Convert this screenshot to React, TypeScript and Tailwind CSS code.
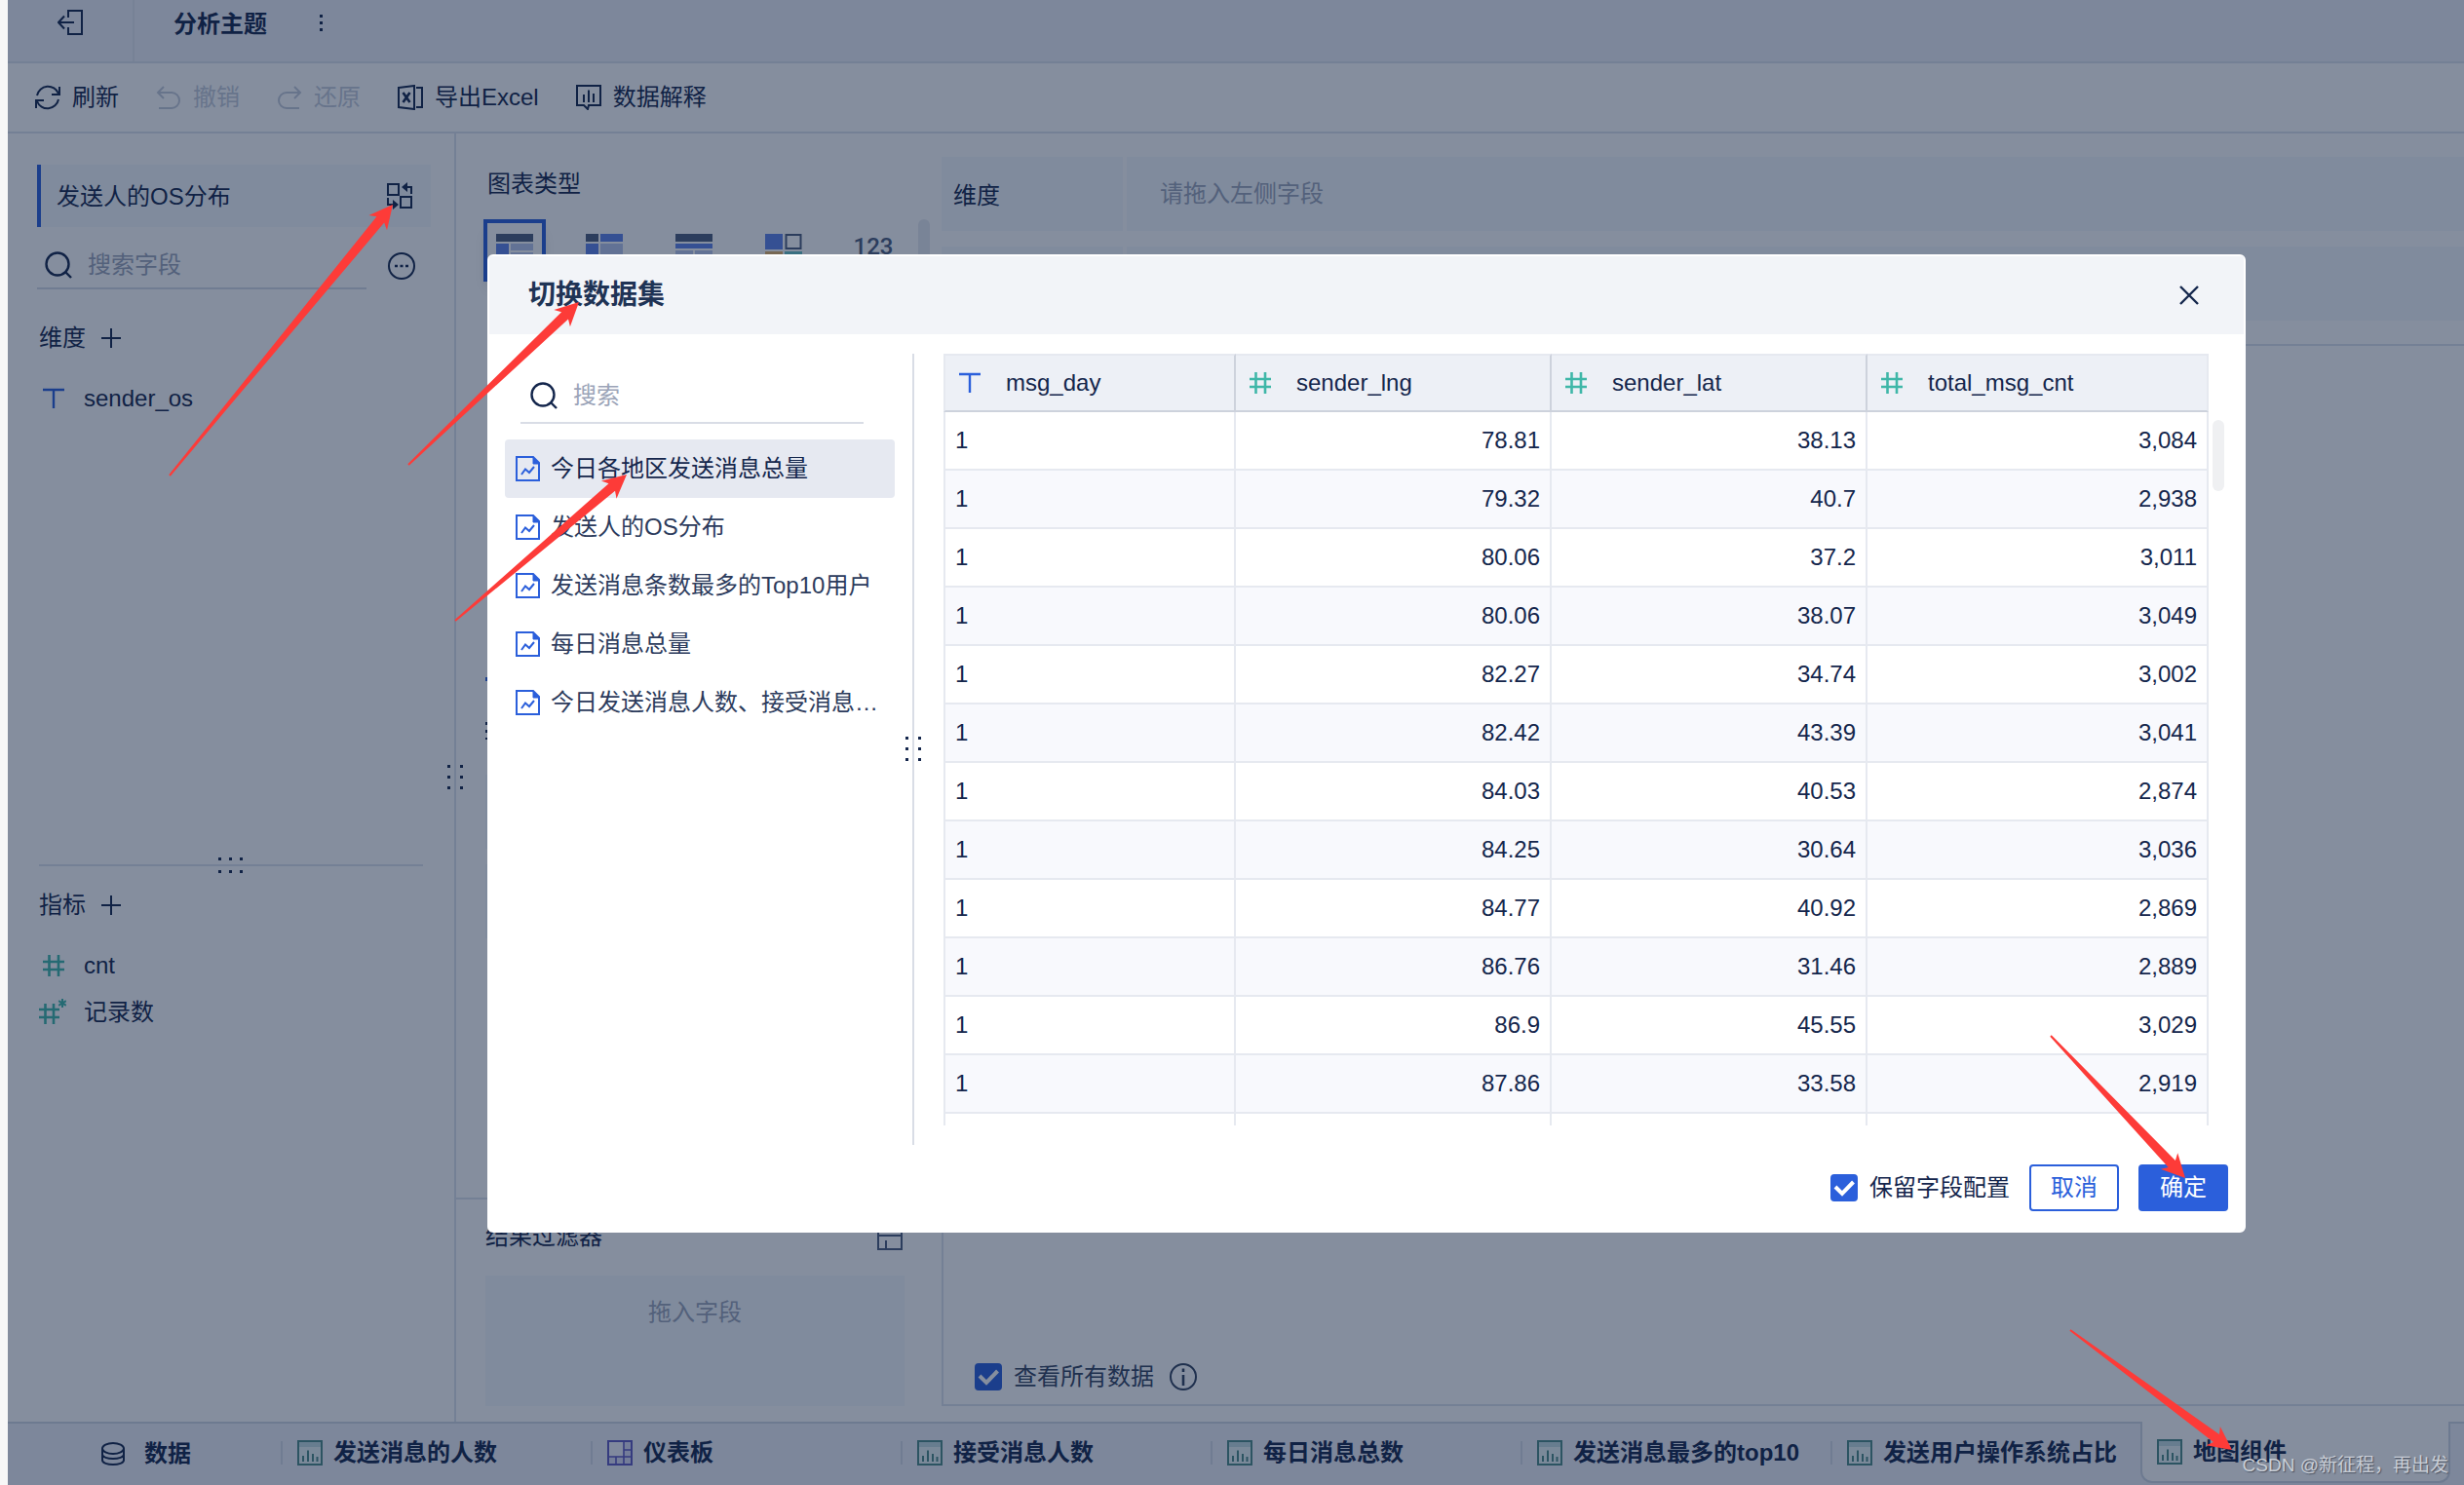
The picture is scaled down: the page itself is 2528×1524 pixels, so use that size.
import { useState } from "react";
import type { ReactNode } from "react";

interface Column {
  name: string;
  type: "text" | "number";
  width: string;
}

const datasets = [
  "今日各地区发送消息总量",
  "发送人的OS分布",
  "发送消息条数最多的Top10用户",
  "每日消息总量",
  "今日发送消息人数、接受消息人数",
];

const columns: Column[] = [
  { name: "msg_day", type: "text", width: "w-[300px]" },
  { name: "sender_lng", type: "number", width: "w-[324px]" },
  { name: "sender_lat", type: "number", width: "w-[324px]" },
  { name: "total_msg_cnt", type: "number", width: "w-auto" },
];

const rows = [
  ["1", "78.81", "38.13", "3,084"],
  ["1", "79.32", "40.7", "2,938"],
  ["1", "80.06", "37.2", "3,011"],
  ["1", "80.06", "38.07", "3,049"],
  ["1", "82.27", "34.74", "3,002"],
  ["1", "82.42", "43.39", "3,041"],
  ["1", "84.03", "40.53", "2,874"],
  ["1", "84.25", "30.64", "3,036"],
  ["1", "84.77", "40.92", "2,869"],
  ["1", "86.76", "31.46", "2,889"],
  ["1", "86.9", "45.55", "3,029"],
  ["1", "87.86", "33.58", "2,919"],
  ["", "", "", ""],
];

const tabs = [
  { name: "发送消息的人数", icon: "chart" },
  { name: "仪表板", icon: "board" },
  { name: "接受消息人数", icon: "chart" },
  { name: "每日消息总数", icon: "chart" },
  { name: "发送消息最多的top10", icon: "chart" },
  { name: "发送用户操作系统占比", icon: "chart" },
];

const arrows = [
  { from: [174, 488], to: [403, 210] },
  { from: [419, 477], to: [594, 310] },
  { from: [467, 637], to: [643, 487] },
  { from: [2104, 1063], to: [2242, 1209] },
  { from: [2124, 1365], to: [2290, 1488] },
];

function Svg({ size = 26, className = "", children }: { size?: number; className?: string; children: ReactNode }) {
  return (
    <svg width={size} height={size} viewBox={`0 0 ${size} ${size}`} fill="none" stroke="currentColor" strokeWidth="2" className={`shrink-0 ${className}`} aria-hidden="true">
      {children}
    </svg>
  );
}

function SearchIcon() {
  return (
    <Svg size={28}>
      <circle cx="13" cy="13" r="11.5" strokeWidth="2.4" />
      <path d="M21 21l6 6" strokeWidth="2.4" />
    </Svg>
  );
}

function TextTypeIcon() {
  return (
    <Svg size={22} className="text-[#2b5fdb]">
      <path d="M0 2h22M11 2v19" strokeWidth="2.4" />
    </Svg>
  );
}

function NumberTypeIcon() {
  return (
    <Svg size={22} className="text-[#3fb7a8]">
      <path d="M6.5 0v22M16 0v22M0 7h22M0 15h22" strokeWidth="2.6" />
    </Svg>
  );
}

function RecordCountIcon() {
  return (
    <Svg size={28} className="text-[#3fb7a8]">
      <path d="M6.5 5v21M15 5v21M0 11h21M0 19h21" strokeWidth="2.6" />
      <path d="M24 0v9M20.2 2.2l7.6 4.6M27.8 2.2l-7.6 4.6" strokeWidth="2" />
    </Svg>
  );
}

function DatasetIcon() {
  return (
    <Svg className="text-[#2b5fdb]">
      <path d="M1 1h17l6 6v18H1z" />
      <path d="M18 1l6 7h-6z" fill="currentColor" strokeWidth="1" />
      <path d="M6 19l4-5.500 4 3.500 5-6" />
    </Svg>
  );
}

function ChartTabIcon() {
  return (
    <Svg className="text-[#4d8a86]">
      <rect x="1" y="1" width="24" height="24" fill="#e9f4f4" />
      <rect x="2" y="2" width="22" height="5" fill="#c3dde0" stroke="none" />
      <path d="M6 22v-6M11 22V10.500M16 22v-8M20.500 22v-5" />
    </Svg>
  );
}

function BoardTabIcon() {
  return (
    <Svg className="text-[#5f58c0]">
      <rect x="1" y="1" width="24" height="24" fill="#dcdcf5" />
      <rect x="2" y="2" width="15" height="14" fill="#f4f5fd" stroke="none" />
      <path d="M17 1v16M1 17h24M17 10h8M9 17v8M17 17v8" strokeWidth="1.6" />
    </Svg>
  );
}

function PlusIcon() {
  return (
    <Svg size={20}>
      <path d="M10 0v20M0 10h20" />
    </Svg>
  );
}

function DragDots({ vertical = false }: { vertical?: boolean }) {
  return vertical ? (
    <svg width="16" height="26" viewBox="0 0 16 26" fill="#14264c" aria-hidden="true">
      {[0, 11, 22].map((y) => [0, 13].map((x) => <rect key={`${x}-${y}`} x={x} y={y} width="3" height="3" />))}
    </svg>
  ) : (
    <svg width="26" height="16" viewBox="0 0 26 16" fill="#14264c" aria-hidden="true">
      {[0, 11, 22].map((x) => [0, 13].map((y) => <rect key={`${x}-${y}`} x={x} y={y} width="3" height="3" />))}
    </svg>
  );
}

function CheckBox({ label, id }: { label: string; id: string }) {
  return (
    <div className="flex items-center gap-3">
      <span className="relative flex h-7 w-7">
        <input id={id} type="checkbox" defaultChecked className="peer h-7 w-7 appearance-none rounded-sm border-2 border-[#2b5fdb] checked:bg-[#2b5fdb]" />
        <svg className="pointer-events-none absolute inset-0 hidden peer-checked:block" width="28" height="28" viewBox="0 0 28 28" fill="none" stroke="#fff" strokeWidth="4" aria-hidden="true">
          <path d="M5 13l7 7L23.500 8" />
        </svg>
      </span>
      <label htmlFor={id}>{label}</label>
    </div>
  );
}

function ToolButton({ label, disabled = false, children }: { label: string; disabled?: boolean; children: ReactNode }) {
  return (
    <button type="button" disabled={disabled} className="flex items-center gap-3 disabled:text-[#c3cad8]">
      {children}
      {label}
    </button>
  );
}

function TopBar() {
  return (
    <>
      <header className="flex h-[65px] border-b-2 border-[#dde2ec] bg-[#eff1f8]">
        <div className="flex w-[130px] justify-center border-r-2 border-[#e3e7ef] pt-[10px]">
          <button type="button" aria-label="退出" className="h-[26px]">
            <Svg>
              <path d="M11 8V1h14v24H11v-7M1 13h16M7 6.500L1 13l6 6.500" />
            </Svg>
          </button>
        </div>
        <h1 className="pt-[7px] pl-10 font-bold leading-9">分析主题</h1>
        <button type="button" aria-label="更多" className="ml-[54px] h-12">
          <svg width="4" height="18" viewBox="0 0 4 18" fill="currentColor" aria-hidden="true">
            <rect width="3" height="3" />
            <rect y="7" width="3" height="3" />
            <rect y="14" width="3" height="3" />
          </svg>
        </button>
      </header>
      <div className="flex h-[72px] items-center gap-[38px] border-b-2 border-[#dde2ec] pl-7">
        <ToolButton label="刷新">
          <Svg>
            <path d="M2 11A11.500 11.500 0 0 1 24 9M24 15A11.500 11.500 0 0 1 2 17M25 2v8h-8M1 24v-8h8" />
          </Svg>
        </ToolButton>
        <ToolButton label="撤销" disabled>
          <Svg>
            <path d="M8 2L2 8l6 6M2 8h14a8 8 0 0 1 0 16H3" />
          </Svg>
        </ToolButton>
        <ToolButton label="还原" disabled>
          <Svg>
            <path d="M18 2l6 6-6 6M24 8H10a8 8 0 0 0 0 16h13" />
          </Svg>
        </ToolButton>
        <ToolButton label="导出Excel">
          <Svg>
            <path d="M1 3l16-2v24L1 23zM19 3h6v20h-6" />
            <path d="M5.500 8l7 10M12.500 8l-7 10" strokeWidth="2.600" />
          </Svg>
        </ToolButton>
        <ToolButton label="数据解释">
          <Svg>
            <path d="M1 1h24v20H13l-1 4-4-4H1zM8 10v8M13 5.500V18M18 9v9" />
          </Svg>
        </ToolButton>
      </div>
    </>
  );
}

function FieldPanel() {
  return (
    <aside className="relative flex w-[460px] shrink-0 flex-col border-r-2 border-[#dde2ec] pr-6 pl-[30px]">
      <div className="flex-1">
        <div className="mt-8 flex h-16 items-center justify-between border-l-4 border-[#2b5fdb] bg-[#f5f9fc] pr-[18px] pl-4">
          <span className="pt-0.5">发送人的OS分布</span>
          <button type="button" aria-label="切换数据集">
            <Svg size={28}>
              <path d="M2 2h11v11H2zM15 15h11v11H15zM20 5h6v7M2 16v7h6" />
              <path d="M22 0v10l-6-5zM7 18v10l6-5z" fill="currentColor" stroke="none" />
            </Svg>
          </button>
        </div>
        <div className="mt-4 flex items-center justify-between pr-4">
          <div className="flex h-12 w-[338px] items-center gap-4 border-b-2 border-[#d5dbe6] pl-2">
            <SearchIcon />
            <input aria-label="搜索字段" placeholder="搜索字段" className="w-full outline-none placeholder:text-[#9ba4b8]" />
          </div>
          <button type="button" aria-label="字段选项">
            <Svg size={28}>
              <circle cx="14" cy="14" r="13" />
              <path d="M7 14h3M12.500 14h3M18 14h3" strokeWidth="2.500" />
            </Svg>
          </button>
        </div>
        <div className="mt-[30px] flex h-10 items-center gap-4 pl-0.5">
          <h2>维度</h2>
          <button type="button" aria-label="添加维度"><PlusIcon /></button>
        </div>
        <ul className="mt-[18px] pl-0.5">
          <li className="flex h-12 items-center gap-5 pl-1"><TextTypeIcon />sender_os</li>
        </ul>
      </div>

      <div className="relative mr-2 ml-0.5 h-0.5 bg-[#dde2ec]">
        <div className="absolute left-1/2 -top-[7px] -translate-x-1/2"><DragDots /></div>
      </div>

      <div className="h-[570px] pt-5 pl-0.5">
        <div className="flex h-10 items-center gap-4">
          <h2>指标</h2>
          <button type="button" aria-label="添加指标"><PlusIcon /></button>
        </div>
        <ul className="mt-[18px]">
          <li className="flex h-12 items-center gap-5 pl-1"><NumberTypeIcon />cnt</li>
          <li className="flex h-12 items-center gap-[18px]"><RecordCountIcon />记录数</li>
        </ul>
      </div>
      <div className="absolute -right-[9px] top-1/2 -translate-y-1/2"><DragDots vertical /></div>
    </aside>
  );
}

function ConfigPanel() {
  return (
    <section className="flex w-[498px] shrink-0 flex-col">
      <div className="flex-1 pl-7">
        <h2 className="mt-8 pl-1 leading-10">图表类型</h2>
        <div className="mt-4 flex">
          <div className="flex gap-7">
            <button type="button" aria-label="分组表" className="flex h-16 w-16 items-start justify-center border-4 border-[#2b5fdb] pt-[11px] shadow-lg">
              <Svg size={38}>
                <g stroke="none">
                  <path d="M0 0h38v8H0z" fill="#4c5c7c" />
                  <path d="M0 10h13v28H0z" fill="#5f82e8" />
                  <path d="M15 10h23v7H15zM15 19h23v19H15z" fill="#b9c6ec" />
                </g>
              </Svg>
            </button>
            <button type="button" aria-label="交叉表" className="flex h-16 w-16 items-start justify-center pt-[15px]">
              <Svg size={38}>
                <g stroke="none">
                  <path d="M0 0h13v8H0z" fill="#4c5c7c" />
                  <path d="M15 0h23v8H15zM0 10h13v28H0z" fill="#5f82e8" />
                  <path d="M15 10h23v28H15z" fill="#b9c6ec" />
                </g>
              </Svg>
            </button>
            <button type="button" aria-label="明细表" className="flex h-16 w-16 items-start justify-center pt-[15px]">
              <Svg size={38}>
                <g stroke="none">
                  <path d="M0 0h38v8H0z" fill="#4c5c7c" />
                  <path d="M0 10h38v5H0z" fill="#5f82e8" />
                  <path d="M0 17h18v21H0zM20 17h18v21H20z" fill="#b9c6ec" />
                </g>
              </Svg>
            </button>
            <button type="button" aria-label="颜色表格" className="flex h-16 w-16 items-start justify-center pt-[15px]">
              <Svg size={38}>
                <path d="M0 0h18v16H0z" fill="#5f82e8" stroke="none" />
                <path d="M21.500 1h15v14h-15z" stroke="#4c5c7c" />
                <path d="M0 18h18v20H0z" fill="#e2b36b" stroke="none" />
                <path d="M20 18h18v20H20z" fill="#67c0c4" stroke="none" />
              </Svg>
            </button>
            <button type="button" className="flex h-16 w-16 justify-center pt-[10px] font-[Roboto] font-medium leading-9 text-[#4c5c7c]">123</button>
          </div>
          <div className="ml-[14px] h-24 w-3 rounded-full bg-[#e6eaf0]" />
        </div>
        {/* property tab and field wells */}
        <div className="mt-[374px] pl-0.5">
          <div className="h-1 w-24 bg-[#2b5fdb]" />
          <svg className="mt-[42px]" width="26" height="18" viewBox="0 0 26 18" fill="currentColor" aria-hidden="true">
            <path d="M0 0h3v3H0zM0 8h3v3H0zM0 16h3v2H0zM7 0h19v3H7zM7 8h19v3H7zM7 16h19v2H7z" />
          </svg>
          <div className="mt-9 mr-[38px] h-[76px] bg-[#f5f9fc]" />
          <div className="mt-4 mr-[38px] h-[76px] bg-[#f5f9fc]" />
        </div>
      </div>
      <div className="border-t-2 border-[#dde2ec] pr-[38px] pb-4 pl-[30px]">
        <div className="mt-[18px] flex h-10 items-center justify-between">
          <h2>结果过滤器</h2>
          <Svg size={28} className="text-[#4c5c7c]">
            <path d="M1 1h24v26H1zM1 13h24M9 18v9" />
          </Svg>
        </div>
        <div className="mt-5 h-[134px] bg-[#f5f9fc] pt-5 text-center leading-9 text-[#9ba4b8]">拖入字段</div>
      </div>
    </section>
  );
}

function PreviewPanel() {
  return (
    <section className="flex min-w-0 flex-1 flex-col">
      <div className="mt-6 flex h-[76px] items-center bg-[#f5f9fc]">
        <h2 className="h-full w-[190px] border-r-4 border-white pt-0.5 pl-3 leading-[76px]">维度</h2>
        <p className="pl-[34px] text-[#9ba4b8]">请拖入左侧字段</p>
      </div>
      <div className="mt-4 flex h-[76px] items-center bg-[#f5f9fc]">
        <h2 className="h-full w-[190px] border-r-4 border-white pt-0.5 pl-3 leading-[76px]">指标</h2>
        <p className="pl-[34px] text-[#9ba4b8]">请拖入左侧字段</p>
      </div>
      <div className="mt-6 mb-4 flex flex-1 items-end border-y-2 border-l-2 border-[#dde2ec] pb-[10px] pl-8 text-[#33435f]">
        <div className="flex items-center gap-4">
          <CheckBox id="view-all" label="查看所有数据" />
          <Svg size={28}>
            <circle cx="14" cy="14" r="13" />
            <path d="M14 12v11M14 5.500v3.500" strokeWidth="2.600" />
          </Svg>
        </div>
      </div>
    </section>
  );
}

function TabBar() {
  return (
    <nav className="flex h-[65px] bg-[#eff1f8] font-bold">
      <button type="button" className="flex w-[280px] items-center gap-5 border-t-2 border-[#cfd6e3] pb-0.5 pl-24">
        <Svg size={24}>
          <ellipse cx="12" cy="6.500" rx="11" ry="5.500" />
          <path d="M1 6.500v12c0 6 22 6 22 0v-12M1 12.500c0 6 22 6 22 0" />
        </Svg>
        数据
      </button>
      {tabs.map((tab) => (
        <button key={tab.name} type="button" className="flex w-[318px] items-center border-t-2 border-[#cfd6e3] pb-1">
          <span className="h-6 w-0.5 bg-[#d5dbe6]" />
          <span className="flex items-center gap-[11px] pl-[15px]">
            {tab.icon === "board" ? <BoardTabIcon /> : <ChartTabIcon />}
            {tab.name}
          </span>
        </button>
      ))}
      <button type="button" className="mb-0.5 flex w-[318px] items-center gap-[11px] rounded-b-xl border-x-2 border-b-2 border-[#cfd6e3] bg-white pl-[15px]">
        <ChartTabIcon />
        地图组件
      </button>
      <div className="flex-1 border-t-2 border-[#cfd6e3]" />
    </nav>
  );
}

function DatasetTable() {
  return (
    <div className="relative min-w-0 flex-1 overflow-hidden pr-9">
      <table className="w-full table-fixed border-separate border-spacing-0">
        <thead>
          <tr className="h-[60px] bg-[#edf0f6]">
            {columns.map((col) => (
              <th key={col.name} className={`${col.width} border-t-2 border-r-2 border-b-2 border-t-[#e6e9f0] border-r-[#cdd2dc] border-b-[#cdd2dc] p-0 text-left font-normal first:border-l-2 first:border-l-[#e6e9f0] last:border-r-[#e6e9f0]`}>
                <span className="flex items-center gap-[26px] pl-[14px]">
                  {col.type === "text" ? <TextTypeIcon /> : <NumberTypeIcon />}
                  {col.name}
                </span>
              </th>
            ))}
          </tr>
        </thead>
        <tbody>
          {rows.map((row, i) => (
            <tr key={i} className="h-[60px] even:bg-[#f8f9fd]">
              {row.map((cell, j) => (
                <td key={j} className="border-r-2 border-b-2 border-[#e6e9f0] px-[10px] py-0 text-right first:border-l-2 first:text-left">
                  {cell}
                </td>
              ))}
            </tr>
          ))}
        </tbody>
      </table>
      <div className="absolute top-[68px] right-5 h-[73px] w-3 rounded-full bg-[#eff0f2]" />
    </div>
  );
}

function SwitchDatasetDialog() {
  const [selected, setSelected] = useState(datasets[0]);

  return (
    <div role="dialog" aria-label="切换数据集" className="flex min-w-0 flex-1 flex-col rounded-md border-2 border-white bg-white">
      <div className="flex h-20 items-center justify-between bg-[#f2f4f8] pr-[46px] pl-10">
        <h2 className="text-[28px] leading-10 font-bold text-[#1f3355]">切换数据集</h2>
        <button type="button" aria-label="关闭">
          <Svg size={20}>
            <path d="M1 1l18 18M19 1L1 19" strokeWidth="2.400" />
          </Svg>
        </button>
      </div>

      <div className="flex min-h-0 flex-1 pt-5">
        <div className="relative w-[436px] shrink-0 border-r-2 border-[#d9dde6] pl-4">
          <div className="mt-4 ml-4 flex h-14 w-[352px] items-center gap-4 border-b-2 border-[#d9dde6] pl-[10px]">
            <SearchIcon />
            <input aria-label="搜索" placeholder="搜索" className="w-full outline-none placeholder:text-[#9ba4b8]" />
          </div>
          <ul className="mt-4 w-[400px]">
            {datasets.map((name) => (
              <li key={name}>
                <button
                  type="button"
                  onClick={() => setSelected(name)}
                  className={`flex h-[60px] w-full items-center gap-[10px] rounded pr-4 pl-[11px] text-left ${name === selected ? "bg-[#e6e9f1]" : "text-[#2c3b5c]"}`}
                >
                  <DatasetIcon />
                  <span className="truncate">{name}</span>
                </button>
              </li>
            ))}
          </ul>
          <div className="absolute top-1/2 -right-[9px] -translate-y-1/2"><DragDots vertical /></div>
        </div>
        <div className="flex min-w-0 flex-1 pb-5 pl-[30px]">
          <DatasetTable />
        </div>
      </div>

      <div className="flex items-center justify-end gap-5 px-4 py-5">
        <CheckBox id="keep-config" label="保留字段配置" />
        <button type="button" className="h-12 w-[92px] rounded border-2 border-[#2b5fdb] text-[#2b5fdb]">取消</button>
        <button type="button" className="h-12 w-[92px] rounded bg-[#2b5fdb] text-white">确定</button>
      </div>
    </div>
  );
}

// tapered arrow: thin at the tail, arrow head at the tip
function arrowPoints(from: number[], to: number[]) {
  const dx = to[0] - from[0];
  const dy = to[1] - from[1];
  const len = Math.hypot(dx, dy);
  const ux = dx / len;
  const uy = dy / len;
  const at = (back: number, side: number) => `${to[0] - ux * back - uy * side},${to[1] - uy * back + ux * side}`;
  return [at(len, 1), at(len, -1), at(20, -5), at(24, -12), at(0, 0), at(24, 12), at(20, 5)].join(" ");
}

export default function App() {
  return (
    <div className="relative flex h-screen overflow-hidden bg-[#f7f7f7] pl-2 font-['Liberation_Sans','Noto_Sans_CJK_SC',sans-serif] text-[24px] leading-9 text-[#14264c]">
      <div className="flex min-w-0 flex-1 flex-col bg-white">
        <TopBar />
        <main className="flex min-h-0 flex-1">
          <FieldPanel />
          <ConfigPanel />
          <PreviewPanel />
        </main>
        <TabBar />
      </div>

      <div className="absolute inset-y-0 right-0 left-2 flex bg-[#0b1d3e]/50 pt-[261px] pr-[224px] pb-[259px] pl-[492px]">
        <SwitchDatasetDialog />
      </div>

      <svg className="pointer-events-none absolute inset-0 h-full w-full" fill="#fd3b38" aria-hidden="true">
        {arrows.map((a) => (
          <polygon key={a.from.join()} points={arrowPoints(a.from, a.to)} />
        ))}
      </svg>
      <p className="absolute right-4 bottom-1 text-[19px] leading-8 text-[#c9ced6] [text-shadow:1px_1px_1px_#4a5262]">CSDN @新征程，再出发</p>
    </div>
  );
}
